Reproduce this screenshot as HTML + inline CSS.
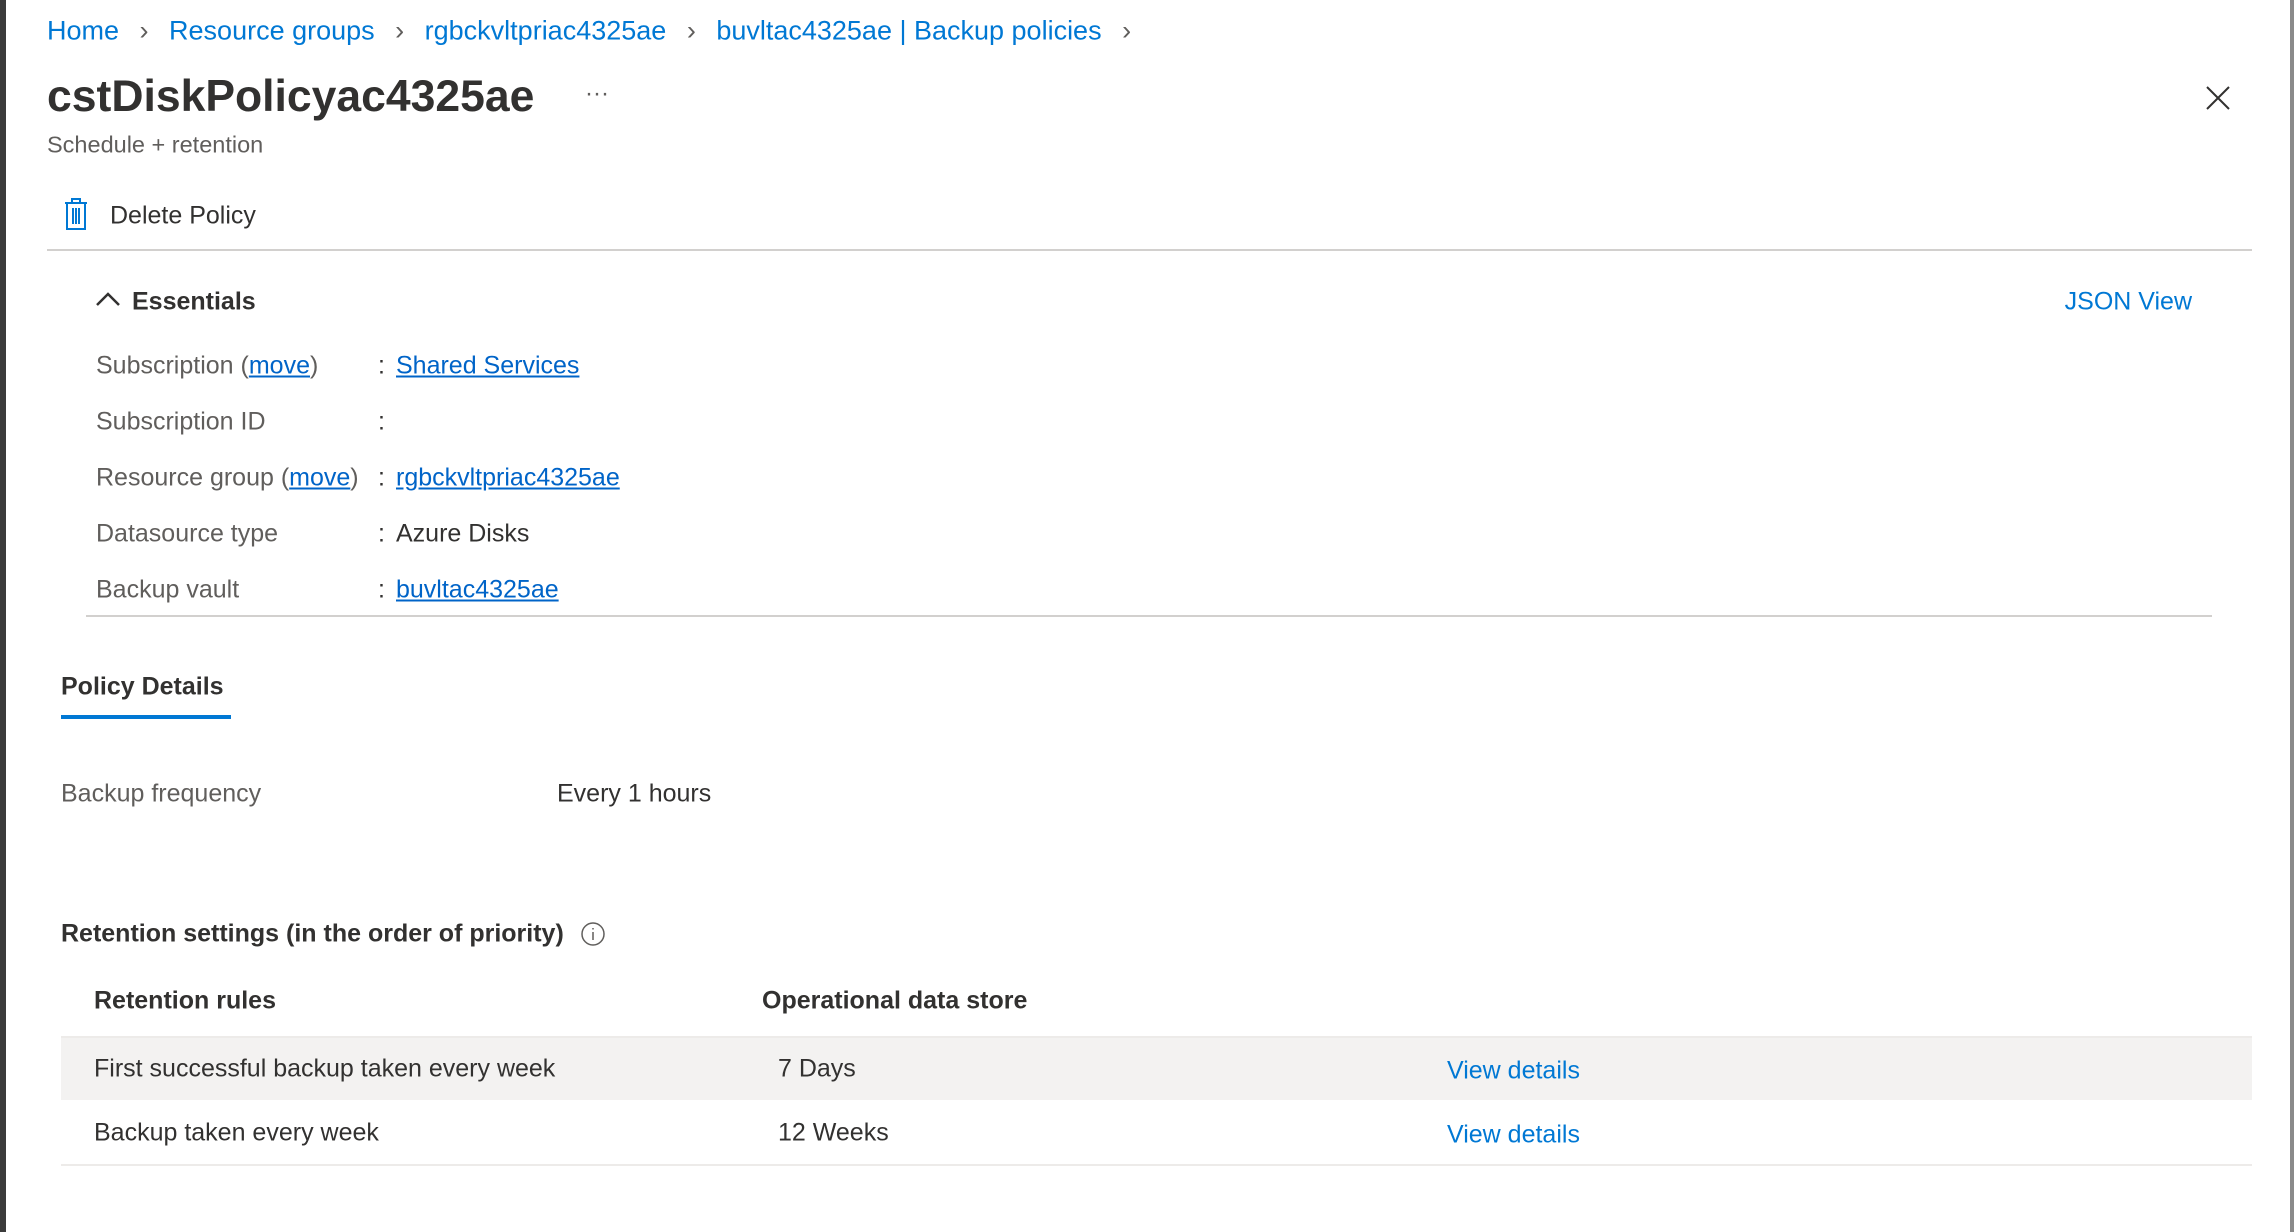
<!DOCTYPE html>
<html><head><meta charset="utf-8"><style>
*{margin:0;padding:0;box-sizing:border-box}
body{width:2294px;height:1232px;background:#fff;font-family:"Liberation Sans",sans-serif;color:#323130;position:relative;overflow:hidden}
.a{position:absolute;white-space:nowrap}
.lk{color:#0078d4}
.ul{color:#0064c8;text-decoration:underline}
.t{font-size:25px;transform:translateY(-50%)}
</style></head><body>
<div class="a" style="left:0;top:0;width:6px;height:1232px;background:#3b3b3b"></div>
<div class="a" style="left:2290px;top:0;width:4px;height:1232px;background:#8a8a8a"></div>

<div class="a t lk" style="left:47px;top:31px;font-size:27px">Home <span style="color:#605e5c;margin:0 13px">›</span> Resource groups <span style="color:#605e5c;margin:0 13px">›</span> rgbckvltpriac4325ae <span style="color:#605e5c;margin:0 13px">›</span> buvltac4325ae | Backup policies <span style="color:#605e5c;margin:0 13px">›</span></div>

<div class="a t" style="left:47px;top:97px;font-size:44.5px;font-weight:bold;color:#323130">cstDiskPolicyac4325ae</div>
<div class="a t" style="left:585px;top:94px;font-size:24px;color:#605e5c">···</div>
<svg class="a" style="left:2206px;top:86px" width="24" height="24" viewBox="0 0 24 24"><path d="M1 1L23 23M23 1L1 23" stroke="#323130" stroke-width="2"/></svg>
<div class="a t" style="left:47px;top:145px;font-size:23.5px;color:#605e5c">Schedule + retention</div>

<svg class="a" style="left:64px;top:198px" width="24" height="32" viewBox="0 0 24 32"><path d="M1 5H23M8 5V1H16V5M3 5V31H21V5M9 10V26M12 10V26M15 10V26" stroke="#0078d4" stroke-width="2" fill="none"/></svg>
<div class="a t" style="left:110px;top:216px;font-size:25px">Delete Policy</div>
<div class="a" style="left:47px;top:249px;width:2205px;height:2px;background:#d2d0ce"></div>

<svg class="a" style="left:96px;top:291px" width="24" height="16" viewBox="0 0 24 16"><path d="M1 14L12 3L23 14" stroke="#323130" stroke-width="2.5" fill="none"/></svg>
<div class="a t" style="left:132px;top:302px;font-weight:bold">Essentials</div>
<div class="a t lk" style="right:102px;top:302px;font-size:25px">JSON View</div>

<div class="a t" style="left:96px;top:366px;color:#605e5c">Subscription (<span class="ul">move</span>)</div>
<div class="a t" style="left:378px;top:366px">:</div>
<div class="a t ul" style="left:396px;top:366px">Shared Services</div>
<div class="a t" style="left:96px;top:422px;color:#605e5c">Subscription ID</div>
<div class="a t" style="left:378px;top:422px">:</div>
<div class="a t" style="left:96px;top:478px;color:#605e5c">Resource group (<span class="ul">move</span>)</div>
<div class="a t" style="left:378px;top:478px">:</div>
<div class="a t ul" style="left:396px;top:478px">rgbckvltpriac4325ae</div>
<div class="a t" style="left:96px;top:534px;color:#605e5c">Datasource type</div>
<div class="a t" style="left:378px;top:534px">:</div>
<div class="a t" style="left:396px;top:534px">Azure Disks</div>
<div class="a t" style="left:96px;top:590px;color:#605e5c">Backup vault</div>
<div class="a t" style="left:378px;top:590px">:</div>
<div class="a t ul" style="left:396px;top:590px">buvltac4325ae</div>
<div class="a" style="left:86px;top:615px;width:2126px;height:2px;background:#d2d0ce"></div>

<div class="a t" style="left:61px;top:687px;font-size:25px;font-weight:bold">Policy Details</div>
<div class="a" style="left:61px;top:715px;width:170px;height:4px;background:#0078d4"></div>

<div class="a t" style="left:61px;top:794px;color:#605e5c">Backup frequency</div>
<div class="a t" style="left:557px;top:794px">Every 1 hours</div>

<div class="a t" style="left:61px;top:934px;font-weight:bold">Retention settings (in the order of priority)</div>
<svg class="a" style="left:580px;top:921px" width="26" height="26" viewBox="0 0 26 26"><circle cx="13" cy="13" r="11" stroke="#605e5c" stroke-width="1.5" fill="none"/><path d="M13 11V19M13 7V8.5" stroke="#605e5c" stroke-width="1.5"/></svg>

<div class="a t" style="left:94px;top:1001px;font-weight:bold">Retention rules</div>
<div class="a t" style="left:762px;top:1001px;font-weight:bold">Operational data store</div>
<div class="a" style="left:61px;top:1036px;width:2191px;height:64px;background:#f3f2f1;border-top:2px solid #edebe9"></div>
<div class="a t" style="left:94px;top:1069px">First successful backup taken every week</div>
<div class="a t" style="left:778px;top:1069px">7 Days</div>
<div class="a t lk" style="left:1447px;top:1071px">View details</div>
<div class="a t" style="left:94px;top:1133px">Backup taken every week</div>
<div class="a t" style="left:778px;top:1133px">12 Weeks</div>
<div class="a t lk" style="left:1447px;top:1135px">View details</div>
<div class="a" style="left:61px;top:1164px;width:2191px;height:2px;background:#edebe9"></div>
</body></html>
